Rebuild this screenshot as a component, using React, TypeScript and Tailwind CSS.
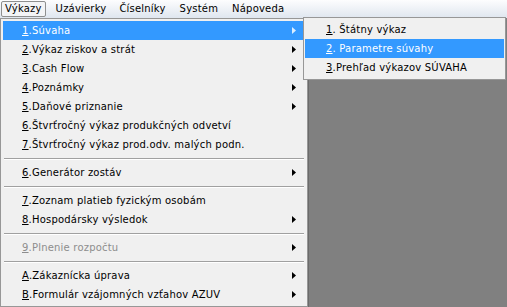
import React from "react";

type Item =
  | { sep: true }
  | { sep?: false; acc: string; rest: string; arrow?: boolean; disabled?: boolean; active?: boolean };

const items: Item[] = [
  { acc: "1", rest: ".Súvaha", arrow: true, active: true },
  { acc: "2", rest: ".Výkaz ziskov a strát", arrow: true },
  { acc: "3", rest: ".Cash Flow", arrow: true },
  { acc: "4", rest: ".Poznámky", arrow: true },
  { acc: "5", rest: ".Daňové priznanie", arrow: true },
  { acc: "6", rest: ".Štvrťročný výkaz produkčných odvetví" },
  { acc: "7", rest: ".Štvrťročný výkaz prod.odv. malých podn." },
  { sep: true },
  { acc: "6", rest: ".Generátor zostáv", arrow: true },
  { sep: true },
  { acc: "7", rest: ".Zoznam platieb fyzickým osobám" },
  { acc: "8", rest: ".Hospodársky výsledok", arrow: true },
  { sep: true },
  { acc: "9", rest: ".Plnenie rozpočtu", arrow: true, disabled: true },
  { sep: true },
  { acc: "A", rest: ".Zákaznícka úprava", arrow: true },
  { acc: "B", rest: ".Formulár vzájomných vzťahov AZUV", arrow: true },
];

const sub = [
  { acc: "1", rest: ". Štátny výkaz" },
  { acc: "2", rest: ". Parametre súvahy", active: true },
  { acc: "3", rest: ".Prehľad výkazov SÚVAHA" },
];

function Arrow({ color }: { color: string }) {
  return (
    <svg width="4" height="7" viewBox="0 0 4 7" className="block">
      <path d="M0 0 L4 3.5 L0 7 Z" fill={color} />
    </svg>
  );
}

export default function App() {
  const font = { fontFamily: '"DejaVu Sans", Verdana, sans-serif' };
  return (
    <div
      className="relative w-[507px] h-[307px] overflow-hidden bg-[#808080] text-[10px] tracking-[0.2px] text-black leading-none"
      style={font}
    >
      {/* menu bar */}
      <div className="flex h-[18px] items-stretch bg-gradient-to-b from-[#fdfdfe] to-[#dfe6ef] pl-[1px]">
        <div className="flex items-center px-[3px] mt-[1px] h-[16px] border border-[#8e8f8f] rounded-[2px] bg-[#f3f4f6]">
          Výkazy
        </div>
        <div className="flex items-center pl-[10px]">Uzávierky</div>
        <div className="flex items-center pl-[13px]">Číselníky</div>
        <div className="flex items-center pl-[14px]">Systém</div>
        <div className="flex items-center pl-[14px]">Nápoveda</div>
      </div>

      {/* main dropdown */}
      <div className="absolute left-0 top-[18px] w-[308px] border border-[#979797] bg-[#f0f0f0] p-[2px] shadow-[1px_1px_0_#6b6b6b]">
        {items.map((it, i) =>
          it.sep ? (
            <div key={i} className="h-[9px] flex items-center px-[1px]">
              <div className="w-full h-[2px] border-t border-[#a0a0a0] border-b border-b-white" />
            </div>
          ) : (
            <div
              key={i}
              className={
                "flex h-[19px] items-center pl-[19px] pr-[9px] " +
                (it.active ? "bg-[#3399ff] text-white" : it.disabled ? "text-[#8d8d8d]" : "")
              }
            >
              <span className="flex-1 whitespace-nowrap">
                <u>{it.acc}</u>
                {it.rest}
              </span>
              {it.arrow && <Arrow color={it.active ? "#dbeeff" : "#000"} />}
            </div>
          )
        )}
      </div>

      {/* submenu */}
      <div className="absolute left-[303px] top-[17px] w-[203px] border border-[#979797] bg-[#f0f0f0] p-[1px] py-[2px]">
        {sub.map((s, i) => (
          <div
            key={i}
            className={
              "flex h-[19px] items-center pl-[21px] whitespace-nowrap " +
              (s.active ? "bg-[#3399ff] text-white" : "")
            }
          >
            <u>{s.acc}</u>
            {s.rest}
          </div>
        ))}
      </div>
    </div>
  );
}
